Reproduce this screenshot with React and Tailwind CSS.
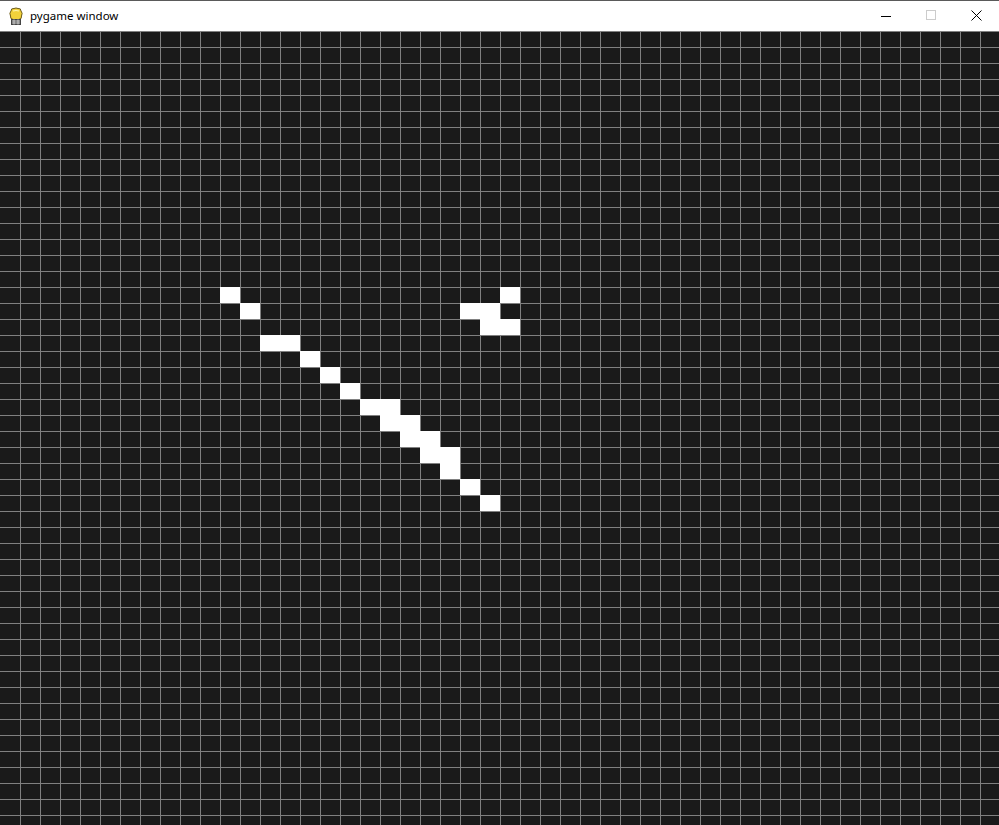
import React from 'react'

const COLS = 50
const ROWS = 50

// live cells, "col,row"
const LIVE = new Set([
  '11,16', '12,17', '13,19', '14,19', '15,20', '16,21', '17,22',
  '18,23', '19,23', '19,24', '20,24', '20,25', '21,25', '21,26', '22,26',
  '22,27', '23,28', '24,29',
  '25,16', '23,17', '24,17', '24,18', '25,18',
])

function PygameIcon() {
  return (
    <svg width="16" height="19" viewBox="0 0 16 19">
      <path d="M3 4 Q3 1 6 1.5 Q8 0.5 10 1.5 Q13 1 13 4 Q15 6 13.5 9 Q14 12 11 12.5 L5 12.5 Q2 12 2.5 9 Q1 6 3 4 Z" fill="#f2d23b" stroke="#6b5a1a" strokeWidth="1" />
      <path d="M5 4 Q8 3 11 4" fill="none" stroke="#fff6b0" strokeWidth="1.2" />
      <rect x="3.5" y="12.5" width="9" height="5" fill="#8a8a8a" stroke="#444" strokeWidth="1" />
      <path d="M6 12.5 L6 17.5 M10 12.5 L10 17.5" stroke="#cfcfcf" strokeWidth="1" />
    </svg>
  )
}

function TitleBar() {
  return (
    <div className="h-[31px] border-t border-[#5a5a5a] bg-white flex items-stretch">
      <div className="flex items-center pl-[8px]">
        <PygameIcon />
        <span className="ml-[6px] text-[11.5px] text-black leading-none font-['Noto_Sans',sans-serif] -mt-px">
          pygame window
        </span>
      </div>
      <div className="ml-auto flex">
        <div className="w-[46px] flex items-center justify-center">
          <div className="w-[10px] h-px bg-black ml-[4px]" />
        </div>
        <div className="w-[46px] flex items-center justify-center">
          <div className="w-[10px] h-[10px] border border-[#cccccc] ml-[2px] -mt-[2px]" />
        </div>
        <div className="w-[46px] flex items-center justify-center">
          <svg width="11" height="11" viewBox="0 0 11 11" className="-mt-px">
            <path d="M0.5 0.5 L10.5 10.5 M10.5 0.5 L0.5 10.5" stroke="#000" strokeWidth="1" />
          </svg>
        </div>
      </div>
    </div>
  )
}

function Grid() {
  const cells = []
  for (let r = 0; r < ROWS; r++) {
    for (let c = 0; c < COLS; c++) {
      const alive = LIVE.has(`${c},${r}`)
      cells.push(
        <div
          key={`${c}-${r}`}
          className={
            alive
              ? 'bg-white'
              : c === 0
                ? 'bg-[#1a1a1a] border-t border-[#808080]'
                : 'bg-[#1a1a1a] border-t border-l border-[#808080]'
          }
        />
      )
    }
  }
  return (
    <div className="grid grid-cols-[repeat(50,20px)] grid-rows-[repeat(50,16px)] w-[1000px]">
      {cells}
    </div>
  )
}

export default function App() {
  return (
    <div className="w-[999px] h-[825px] overflow-hidden bg-[#1a1a1a]">
      <TitleBar />
      <Grid />
    </div>
  )
}
